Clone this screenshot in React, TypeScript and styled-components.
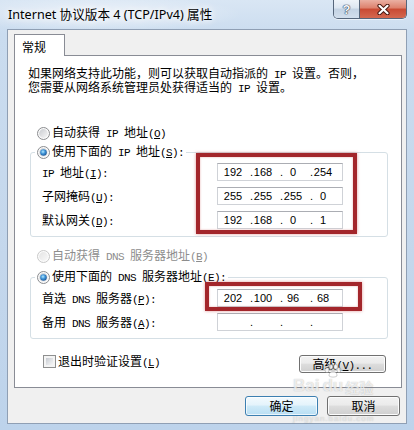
import React, { useId } from "react";
import styled, { createGlobalStyle } from "styled-components";

const GlobalStyle = createGlobalStyle`
  html, body { margin: 0; padding: 0; }
  body { background: #c6d9ee; width: 414px; height: 430px; overflow: hidden; }
  *, *::before, *::after { box-sizing: border-box; }
`;

const CJK_STACK = `"Noto Sans CJK SC", "Noto Sans", sans-serif`;

/* ---------- window frame ---------- */

const Window = styled.div`
  position: relative;
  width: 414px;
  height: 430px;
  display: flex;
  flex-direction: column;
  overflow: hidden;
  background:
    radial-gradient(ellipse 190px 24px at 100px 14px, rgba(255, 255, 255, 0.6), rgba(255, 255, 255, 0) 75%),
    linear-gradient(180deg, #d9e6f4 0%, #cadcef 8%, #c4d7ec 60%, #bdd3eb 100%);
  font-family: ${CJK_STACK};
  font-size: 12px;
  color: #000;
`;

const TitleBar = styled.div`
  height: 29px;
  flex: none;
  display: flex;
  align-items: flex-start;
  padding-left: 8px;
`;

const Title = styled.div`
  margin-top: 7px;
  font-family: "Noto Sans", "Noto Sans CJK SC", sans-serif;
  font-size: 12.6px;
  line-height: 16px;
  height: 16px;
  color: #000;
  white-space: nowrap;
  text-shadow: 0 0 6px #fff, 0 0 10px #fff;
`;

const CaptionButtons = styled.div`
  margin: 0 7px 0 auto;
  display: flex;
  height: 19px;
  border: 1px solid #56667b;
  border-top: none;
  border-radius: 0 0 5px 5px;
  overflow: hidden;
  box-shadow: 0 1px 0 rgba(255, 255, 255, 0.55);
`;

const HelpButton = styled.div`
  width: 26px;
  border-right: 1px solid #56667b;
  background: linear-gradient(180deg, #eef3f9 0%, #dce6f1 45%, #c3d2e3 50%, #d2dfed 100%);
  display: flex;
  align-items: center;
  justify-content: center;
  font-family: "Liberation Sans", Arial, sans-serif;
  font-weight: bold;
  font-size: 13px;
  line-height: 13px;
  color: #f4f7fb;
  text-shadow: 0 0 1px #2d3b4e, 0 0 1px #2d3b4e, 0 0 1px #2d3b4e;
`;

const CloseButton = styled.div`
  width: 46px;
  background: linear-gradient(180deg, #eab0a3 0%, #dd806c 45%, #c94a33 50%, #d4684f 100%);
  display: flex;
  align-items: center;
  justify-content: center;
`;

/* ---------- dialog body ---------- */

const Client = styled.div`
  margin: 0 7px;
  height: 395px;
  flex: none;
  border: 1px solid #8f9fb4;
  background: #f0f0f0;
  padding: 4px 4px 0 6px;
  display: flex;
  flex-direction: column;
`;

const TabStrip = styled.div`
  display: flex;
  height: 21px;
  flex: none;
  position: relative;
  z-index: 1;
`;

const Tab = styled.div`
  width: 51px;
  height: 22px;
  background: #fff;
  border: 1px solid #898c95;
  border-bottom: none;
  padding: 4px 0 0 7px;
  line-height: 16px;
`;

const Panel = styled.div`
  height: 333px;
  flex: none;
  background: #fff;
  border: 1px solid #898c95;
  padding: 10px 13px 0 13px;
  display: flex;
  flex-direction: column;
`;

const Intro = styled.div`
  height: 28px;
  flex: none;
  display: flex;
  flex-direction: column;
`;

const IntroLine = styled.div`
  height: 14px;
  line-height: 14px;
  white-space: nowrap;
`;

const Option = styled.div<{ $top?: number; $left?: number; $disabled?: boolean }>`
  display: flex;
  flex: none;
  align-items: center;
  gap: 2px;
  height: 16px;
  line-height: 16px;
  white-space: nowrap;
  margin-top: ${(p) => p.$top ?? 0}px;
  margin-left: ${(p) => p.$left ?? 0}px;
  color: ${(p) => (p.$disabled ? "#8d8d8d" : "#000")};
`;

const Group = styled.div<{ $top: number }>`
  margin: ${(p) => p.$top}px 0 0 2px;
  flex: none;
  border: 1px solid #d5dfe5;
  border-radius: 3px;
  padding: 0 44px 7px 11px;
  display: flex;
  flex-direction: column;
`;

const Legend = styled(Option)`
  align-self: flex-start;
  margin: -9px 0 0 -7px;
  padding: 0 2px 0 2px;
  background: #fff;
`;

const FieldGrid = styled.div<{ $top: number }>`
  margin-top: ${(p) => p.$top}px;
  display: grid;
  grid-template-columns: 1fr 126px;
  grid-auto-rows: 18px;
  row-gap: 6px;
  align-items: center;
`;

const FieldLabel = styled.div`
  height: 16px;
  line-height: 16px;
  white-space: nowrap;
`;

const IpBox = styled.div`
  height: 18px;
  border: 1px solid #cfd2d7;
  border-top-color: #abadb3;
  background: #fff;
  display: flex;
  align-items: center;
  padding-left: 5px;
  font-family: "Liberation Sans", Arial, sans-serif;
  font-size: 11px;
  line-height: 14px;
  color: #000;
`;

const Octet = styled.span`
  width: 20px;
  text-align: center;
`;

const Dot = styled.span`
  width: 10px;
  text-align: right;
`;

const BottomRow = styled.div`
  margin-top: 16px;
  flex: none;
  display: flex;
  align-items: flex-start;
  justify-content: space-between;
  padding: 0 2px 0 15px;
`;

const CheckOption = styled.div`
  display: flex;
  align-items: center;
  gap: 2px;
  height: 13px;
  line-height: 16px;
  white-space: nowrap;
`;

const CheckBox = styled.span`
  flex: none;
  width: 13px;
  height: 13px;
  border: 1px solid #8e8f8f;
  background: #f4f4f4;
  padding: 2px;
  &::before {
    content: "";
    display: block;
    width: 7px;
    height: 7px;
    background: linear-gradient(135deg, #c6cad0 0%, #e4e6e9 60%, #f6f6f6 100%);
  }
`;

const PushButton = styled.button<{ $w: number; $h: number; $primary?: boolean }>`
  width: ${(p) => p.$w}px;
  height: ${(p) => p.$h}px;
  padding: 0;
  border: 1px solid ${(p) => (p.$primary ? "#3c7fb1" : "#707070")};
  border-radius: 3px;
  background: ${(p) =>
    p.$primary
      ? "linear-gradient(180deg, #f3fafe 0%, #e4f3fb 45%, #cfeaf8 50%, #b8def3 100%)"
      : "linear-gradient(180deg, #f2f2f2 0%, #ebebeb 45%, #dddddd 50%, #cfcfcf 100%)"};
  box-shadow: inset 0 0 0 1px ${(p) => (p.$primary ? "rgba(255, 255, 255, 0.7)" : "#fcfcfc")};
  font-family: ${CJK_STACK};
  font-size: 12px;
  line-height: 16px;
  color: #000;
  white-space: nowrap;
`;

const Footer = styled.div`
  margin-top: 8px;
  flex: none;
  display: flex;
  justify-content: flex-end;
  gap: 9px;
  padding-right: 2px;
`;

/* ---------- text helpers ---------- */

const Lat = styled.span`
  font-family: "Liberation Mono", "DejaVu Sans Mono", monospace;
  font-size: 11px;
  letter-spacing: -0.6px;
`;

const Hotkey = styled.u`
  text-underline-offset: 1px;
`;

const ASCII_RUN = /([\x20-\x7e]+)/;

function mixText(s: string) {
  return s
    .split(ASCII_RUN)
    .filter(Boolean)
    .map((part, i) =>
      /^[\x20-\x7e]+$/.test(part) ? <Lat key={i}>{part}</Lat> : <React.Fragment key={i}>{part}</React.Fragment>
    );
}

function Caption({ text, hotkey, tail = "" }: { text: string; hotkey: string; tail?: string }) {
  return (
    <span>
      {mixText(text)}
      <Lat>
        (<Hotkey>{hotkey}</Hotkey>){tail}
      </Lat>
    </span>
  );
}

/* ---------- drawn controls ---------- */

function RadioMark({ checked, disabled }: { checked?: boolean; disabled?: boolean }) {
  const id = useId().replace(/[^a-zA-Z0-9]/g, "");
  return (
    <svg width="13" height="13" viewBox="0 0 13 13" style={{ flex: "none" }}>
      <defs>
        <linearGradient id={`${id}ring`} x1="0" y1="0" x2="1" y2="1">
          <stop offset="0" stopColor={disabled ? "#e4e4e4" : "#c9ccd0"} />
          <stop offset="1" stopColor={disabled ? "#f8f8f8" : "#f7f7f7"} />
        </linearGradient>
        <radialGradient id={`${id}dot`} cx="0.42" cy="0.38" r="0.7">
          <stop offset="0" stopColor="#b4eaff" />
          <stop offset="0.45" stopColor="#3f94d8" />
          <stop offset="1" stopColor="#174c8b" />
        </radialGradient>
      </defs>
      <circle cx="6.5" cy="6.5" r="6" fill="#fbfbfb" stroke={disabled ? "#c8c8c8" : "#8a8c8f"} />
      <circle cx="6.5" cy="6.5" r="4.4" fill={`url(#${id}ring)`} />
      {checked && <circle cx="6.5" cy="6.5" r="3.3" fill={`url(#${id}dot)`} />}
    </svg>
  );
}

function CloseGlyph() {
  return (
    <svg width="13" height="11" viewBox="0 0 13 11">
      <path d="M2.5 1.8 L10.5 9.2 M10.5 1.8 L2.5 9.2" stroke="#4b1a12" strokeWidth="4.2" strokeLinecap="round" />
      <path d="M2.5 1.8 L10.5 9.2 M10.5 1.8 L2.5 9.2" stroke="#ffffff" strokeWidth="2.2" strokeLinecap="round" />
    </svg>
  );
}

function IpField({ value }: { value: string[] }) {
  return (
    <IpBox>
      {value.map((o, i) => (
        <React.Fragment key={i}>
          {i > 0 && <Dot>.</Dot>}
          <Octet>{o}</Octet>
        </React.Fragment>
      ))}
    </IpBox>
  );
}

/* ---------- overlays: hand-drawn highlight boxes and the site watermark ---------- */

const Marker = styled.div<{ $x: number; $y: number; $w: number; $h: number }>`
  position: absolute;
  left: ${(p) => p.$x}px;
  top: ${(p) => p.$y}px;
  width: ${(p) => p.$w}px;
  height: ${(p) => p.$h}px;
  border: 4px solid #a3262b;
  box-shadow: 0 0 3px rgba(200, 70, 70, 0.55), inset 0 0 2px rgba(200, 70, 70, 0.5);
  pointer-events: none;
`;

const Watermark = styled.div`
  position: absolute;
  left: 293px;
  top: 366px;
  width: 96px;
  display: flex;
  flex-direction: column;
  align-items: flex-start;
  pointer-events: none;
  color: rgba(255, 255, 255, 0.72);
  text-shadow: 0 0 1px rgba(110, 110, 110, 0.5);
`;

const MarkLine = styled.div`
  display: flex;
  align-items: flex-end;
  height: 28px;
`;

const MarkLatin = styled.span`
  font-family: "Liberation Sans", Arial, sans-serif;
  font-weight: bold;
  font-size: 17px;
  line-height: 16px;
`;

const MarkCjk = styled.span`
  font-family: ${CJK_STACK};
  font-weight: bold;
  font-size: 14px;
  line-height: 14px;
  margin-left: 2px;
`;

const PawWrap = styled.span`
  display: flex;
  flex-direction: column;
  align-items: center;
  margin-left: 3px;
`;

const MarkUrl = styled.span`
  margin-top: 21px;
  font-family: "Liberation Sans", Arial, sans-serif;
  font-size: 8px;
  line-height: 8px;
  letter-spacing: 1px;
  color: rgba(255, 255, 255, 0.6);
`;

function Paw() {
  return (
    <svg width="18" height="14" viewBox="0 0 18 14">
      <g fill="rgba(255,255,255,0.75)" stroke="rgba(120,120,120,0.45)" strokeWidth="0.8">
        <ellipse cx="3" cy="6" rx="2" ry="2.6" />
        <ellipse cx="7" cy="2.8" rx="2" ry="2.5" />
        <ellipse cx="11.5" cy="2.8" rx="2" ry="2.5" />
        <ellipse cx="15" cy="6" rx="2" ry="2.6" />
        <path d="M5 12 C5 8.5 7 7.5 9 7.5 C11 7.5 13 8.5 13 12 C11 13.5 7 13.5 5 12 Z" />
      </g>
    </svg>
  );
}

/* ---------- page ---------- */

export default function App() {
  return (
    <>
      <GlobalStyle />
      <Window>
        <TitleBar>
          <Title>Internet 协议版本 4 (TCP/IPv4) 属性</Title>
          <CaptionButtons>
            <HelpButton>?</HelpButton>
            <CloseButton>
              <CloseGlyph />
            </CloseButton>
          </CaptionButtons>
        </TitleBar>

        <Client>
          <TabStrip>
            <Tab>常规</Tab>
          </TabStrip>
          <Panel>
            <Intro>
              <IntroLine>{mixText("如果网络支持此功能，则可以获取自动指派的 IP 设置。否则，")}</IntroLine>
              <IntroLine>{mixText("您需要从网络系统管理员处获得适当的 IP 设置。")}</IntroLine>
            </Intro>

            <Option $top={31} $left={9}>
              <RadioMark />
              <Caption text="自动获得 IP 地址" hotkey="O" />
            </Option>

            <Group $top={11}>
              <Legend>
                <RadioMark checked />
                <Caption text="使用下面的 IP 地址" hotkey="S" tail=":" />
              </Legend>
              <FieldGrid $top={3}>
                <FieldLabel>
                  <Caption text="IP 地址" hotkey="I" tail=":" />
                </FieldLabel>
                <IpField value={["192", "168", "0", "254"]} />
                <FieldLabel>
                  <Caption text="子网掩码" hotkey="U" tail=":" />
                </FieldLabel>
                <IpField value={["255", "255", "255", "0"]} />
                <FieldLabel>
                  <Caption text="默认网关" hotkey="D" tail=":" />
                </FieldLabel>
                <IpField value={["192", "168", "0", "1"]} />
              </FieldGrid>
            </Group>

            <Option $top={11} $left={9} $disabled>
              <RadioMark disabled />
              <Caption text="自动获得 DNS 服务器地址" hotkey="B" />
            </Option>

            <Group $top={13}>
              <Legend>
                <RadioMark checked />
                <Caption text="使用下面的 DNS 服务器地址" hotkey="E" tail=":" />
              </Legend>
              <FieldGrid $top={4}>
                <FieldLabel>
                  <Caption text="首选 DNS 服务器" hotkey="P" tail=":" />
                </FieldLabel>
                <IpField value={["202", "100", "96", "68"]} />
                <FieldLabel>
                  <Caption text="备用 DNS 服务器" hotkey="A" tail=":" />
                </FieldLabel>
                <IpField value={["", "", "", ""]} />
              </FieldGrid>
            </Group>

            <BottomRow>
              <CheckOption>
                <CheckBox />
                <Caption text="退出时验证设置" hotkey="L" />
              </CheckOption>
              <PushButton $w={87} $h={18}>
                <Caption text="高级" hotkey="V" tail="..." />
              </PushButton>
            </BottomRow>
          </Panel>

          <Footer>
            <PushButton $w={73} $h={20} $primary>
              确定
            </PushButton>
            <PushButton $w={73} $h={20}>
              取消
            </PushButton>
          </Footer>
        </Client>

        <Marker $x={196} $y={153} $w={161} $h={81} />
        <Marker $x={205} $y={282} $w={157} $h={29} />

        <Watermark>
          <MarkLine>
            <MarkLatin>Bai</MarkLatin>
            <PawWrap>
              <Paw />
              <MarkLatin>du</MarkLatin>
            </PawWrap>
            <MarkCjk>经验</MarkCjk>
          </MarkLine>
          <MarkUrl>jingyan.baidu.com</MarkUrl>
        </Watermark>
      </Window>
    </>
  );
}
